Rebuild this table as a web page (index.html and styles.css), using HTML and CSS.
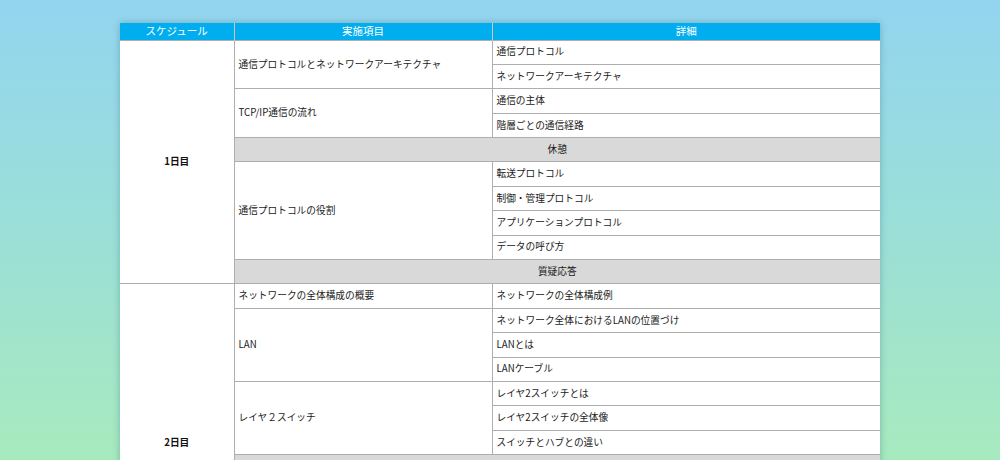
FILE: index.html
```html
<!DOCTYPE html>
<html lang="ja">
<head>
<meta charset="utf-8">
<title>スケジュール</title>
<link rel="stylesheet" href="styles.css">
</head>
<body>
<div class="page">
  <table class="schedule">
    <colgroup>
      <col class="c-day">
      <col class="c-item">
      <col class="c-detail">
    </colgroup>
    <thead>
      <tr>
        <th>スケジュール</th>
        <th>実施項目</th>
        <th>詳細</th>
      </tr>
    </thead>
    <tbody>
      <tr>
        <td class="day" rowspan="10">1日目</td>
        <td rowspan="2">通信プロトコルとネットワークアーキテクチャ</td>
        <td>通信プロトコル</td>
      </tr>
      <tr><td>ネットワークアーキテクチャ</td></tr>
      <tr>
        <td rowspan="2">TCP/IP通信の流れ</td>
        <td>通信の主体</td>
      </tr>
      <tr><td>階層ごとの通信経路</td></tr>
      <tr><td class="break" colspan="2">休憩</td></tr>
      <tr>
        <td rowspan="4">通信プロトコルの役割</td>
        <td>転送プロトコル</td>
      </tr>
      <tr><td>制御・管理プロトコル</td></tr>
      <tr><td>アプリケーションプロトコル</td></tr>
      <tr><td>データの呼び方</td></tr>
      <tr><td class="break" colspan="2">質疑応答</td></tr>

      <tr>
        <td class="day" rowspan="13">2日目</td>
        <td>ネットワークの全体構成の概要</td>
        <td>ネットワークの全体構成例</td>
      </tr>
      <tr>
        <td rowspan="3">LAN</td>
        <td>ネットワーク全体におけるLANの位置づけ</td>
      </tr>
      <tr><td>LANとは</td></tr>
      <tr><td>LANケーブル</td></tr>
      <tr>
        <td rowspan="3">レイヤ２スイッチ</td>
        <td>レイヤ2スイッチとは</td>
      </tr>
      <tr><td>レイヤ2スイッチの全体像</td></tr>
      <tr><td>スイッチとハブとの違い</td></tr>
      <tr><td class="break" colspan="2"></td></tr>
      <tr>
        <td rowspan="4"></td>
        <td></td>
      </tr>
      <tr><td></td></tr>
      <tr><td></td></tr>
      <tr><td></td></tr>
      <tr><td class="break" colspan="2"></td></tr>
    </tbody>
  </table>
</div>
</body>
</html>
```

FILE: styles.css
```css
html, body {
  margin: 0;
  padding: 0;
}

.page {
  height: 460px;
  overflow: hidden;
  padding-top: 23px;
  box-sizing: border-box;
  background: linear-gradient(to bottom, #93d5ef 0%, #9bdfd8 50%, #a7eabe 100%);
  font-family: "Noto Sans CJK JP", "Noto Sans", sans-serif;
}

.schedule {
  width: 760px;
  margin: 0 auto;
  border-collapse: collapse;
  table-layout: fixed;
  background: #fff;
  box-shadow: 0 0 7px rgba(40, 90, 110, 0.35);
  color: #1a1a1a;
  font-size: 9.7px;
}

.c-day { width: 114px; }
.c-item { width: 258px; }
.c-detail { width: 388px; }

.schedule thead tr {
  height: 17px;
}

.schedule th {
  background: #00aeef;
  color: #fff;
  font-weight: normal;
  font-size: 10.5px;
  line-height: 1;
  padding: 0;
  text-align: center;
  border-left: 1px solid #c9c9c9;
}

.schedule th:first-child {
  border-left: none;
}

.schedule tbody tr {
  height: 24.4px;
}

.schedule td {
  border: 1px solid #aeaeae;
  padding: 0 4px;
  line-height: 1;
  vertical-align: middle;
  white-space: nowrap;
}

.schedule tbody tr td:first-child.day {
  border-left: none;
}

.schedule td:last-child {
  border-right: none;
}

.schedule td.day {
  text-align: center;
  font-weight: bold;
  color: #111;
}

.schedule td.break {
  background: #d9d9d9;
  text-align: center;
}
```
